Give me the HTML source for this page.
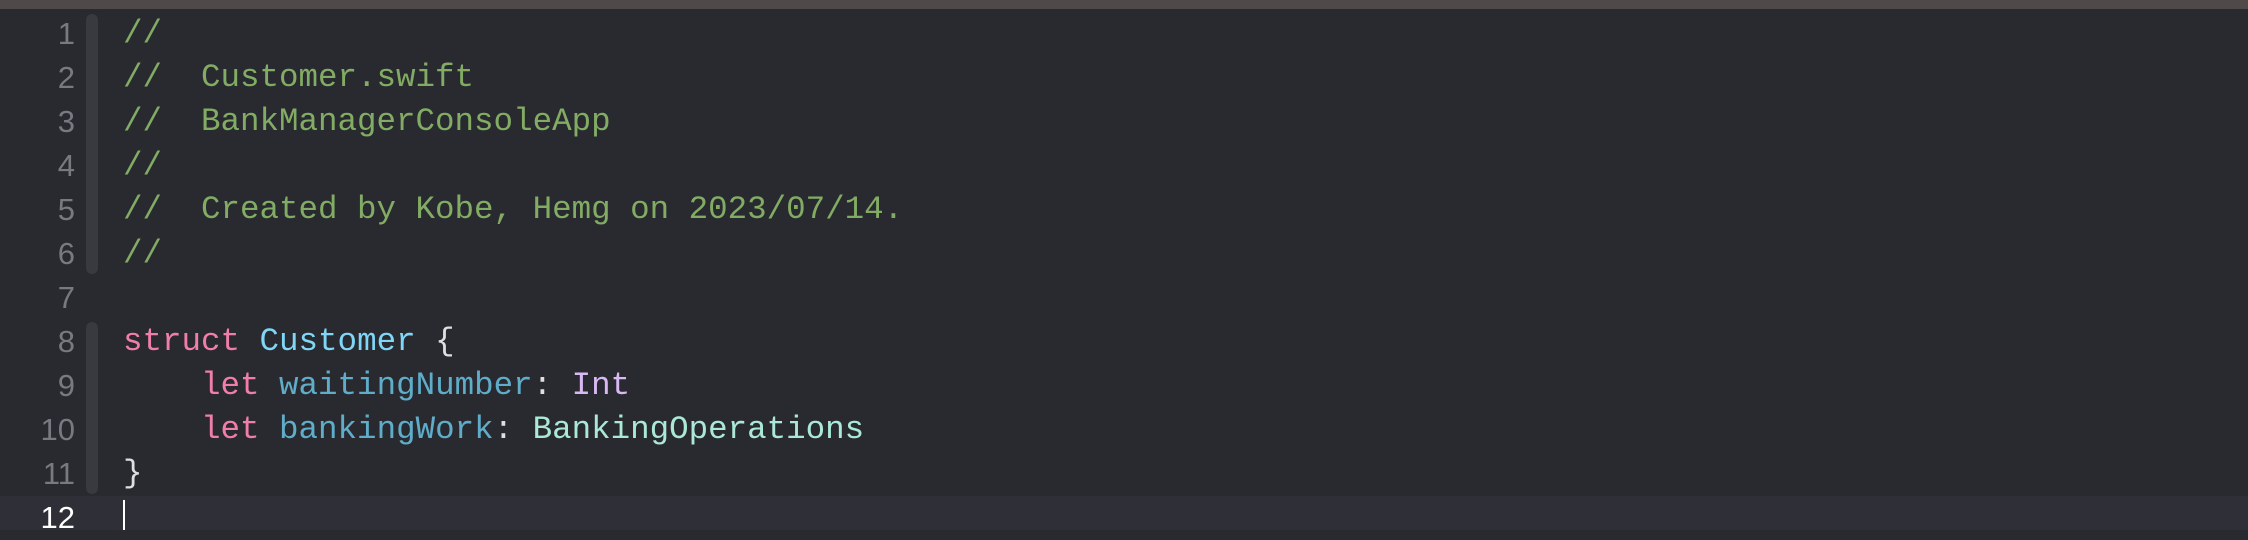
<!DOCTYPE html>
<html><head><meta charset="utf-8"><style>
html,body{margin:0;padding:0;}
body{width:2248px;height:530px;background:#292a30;position:relative;overflow:hidden;font-family:"Liberation Mono",monospace;font-size:32.5px;}
.top{position:absolute;left:0;top:0;width:2248px;height:9px;background:#4f4949;}
.cur{position:absolute;left:0;top:496px;width:2248px;height:34px;background:#2f3037;}
.gut{position:absolute;left:86px;width:12px;background:#393a40;border-radius:6px;}
.l{position:absolute;left:0;width:2248px;height:44px;line-height:44px;white-space:pre;}
.n{position:absolute;left:0;width:75px;color:#777a80;text-align:right;font-family:"Liberation Sans",sans-serif;font-size:31px;}
.t{position:absolute;left:123px;}
.c{color:#82ac64}.k{color:#f07eaa}.ty{color:#7fd6f6}.p{color:#dfdfe0}.v{color:#5fadc9}.i{color:#d9b9f4}.o{color:#abe9d6}
.caret{position:absolute;left:123px;top:500px;width:2px;height:30px;background:#fff;}
</style></head><body>
<div class="top"></div>
<div class="cur"></div>
<div class="gut" style="top:14px;height:260px"></div>
<div class="gut" style="top:322px;height:172px"></div>
<div class="l" style="top:12px"><span class="n">1</span><span class="t c">//</span></div>
<div class="l" style="top:56px"><span class="n">2</span><span class="t c">//  Customer.swift</span></div>
<div class="l" style="top:100px"><span class="n">3</span><span class="t c">//  BankManagerConsoleApp</span></div>
<div class="l" style="top:144px"><span class="n">4</span><span class="t c">//</span></div>
<div class="l" style="top:188px"><span class="n">5</span><span class="t c">//  Created by Kobe, Hemg on 2023/07/14.</span></div>
<div class="l" style="top:232px"><span class="n">6</span><span class="t c">//</span></div>
<div class="l" style="top:276px"><span class="n">7</span></div>
<div class="l" style="top:320px"><span class="n">8</span><span class="t"><span class="k">struct</span> <span class="ty">Customer</span> <span class="p">{</span></span></div>
<div class="l" style="top:364px"><span class="n">9</span><span class="t">    <span class="k">let</span> <span class="v">waitingNumber</span><span class="p">:</span> <span class="i">Int</span></span></div>
<div class="l" style="top:408px"><span class="n">10</span><span class="t">    <span class="k">let</span> <span class="v">bankingWork</span><span class="p">:</span> <span class="o">BankingOperations</span></span></div>
<div class="l" style="top:452px"><span class="n">11</span><span class="t p">}</span></div>
<div class="l" style="top:496px"><span class="n" style="color:#fff">12</span></div>
<div class="caret"></div>
</body></html>
